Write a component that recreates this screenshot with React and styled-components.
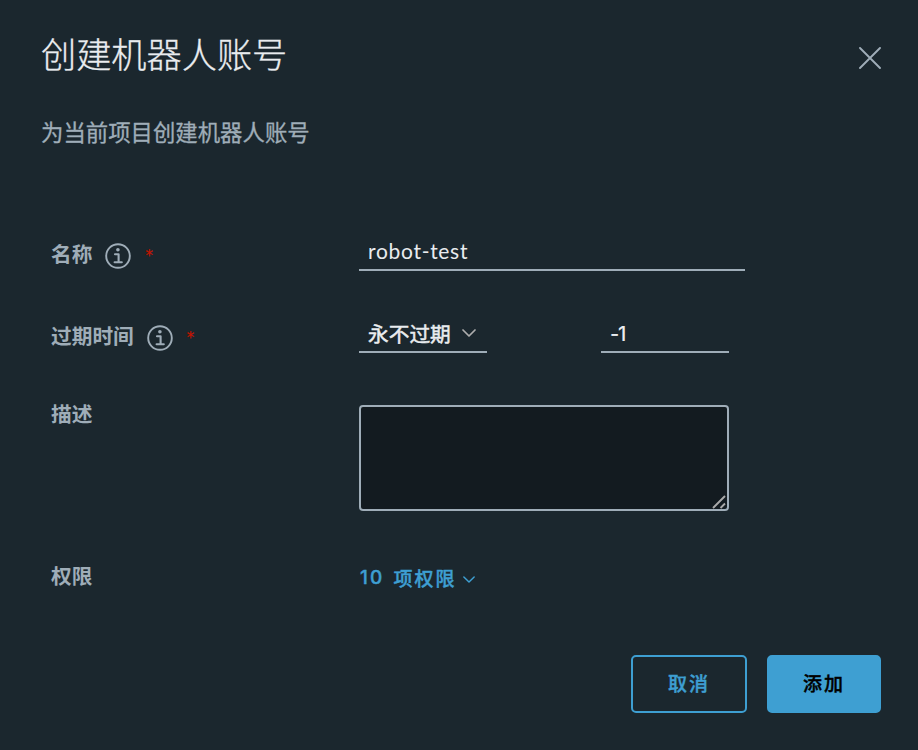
import React from "react";
import styled, { createGlobalStyle } from "styled-components";

const Global = createGlobalStyle`
  * { box-sizing: border-box; }
  body { margin: 0; background: #1b272e; }
  input, textarea, button { font: inherit; color: inherit; }
`;

const Dialog = styled.section`
  width: 918px;
  height: 750px;
  padding: 28px 37px 37px 41px;
  display: flex;
  flex-direction: column;
  background: #1b272e;
  color: #9fadb8;
  font-family: "Lato", "Noto Sans CJK SC", sans-serif;
`;

const Header = styled.header`
  display: flex;
  justify-content: space-between;
  height: 50px;
`;

const Title = styled.h1`
  margin: 0;
  font-size: 35.2px;
  line-height: 50px;
  font-weight: 300;
  font-family: "Noto Sans CJK SC", sans-serif;
  color: #e9ecef;
  -webkit-text-stroke: 0.3px currentColor;
  white-space: nowrap;
`;

const IconButton = styled.button`
  width: 22px;
  height: 22px;
  margin-top: 19px;
  padding: 0;
  border: 0;
  background: none;
  color: #9fadb8;
  svg { display: block; }
`;

const Subtitle = styled.p`
  margin: 37px 0 0;
  height: 32px;
  font-size: 22.4px;
  line-height: 32px;
  font-family: "Noto Sans CJK SC", sans-serif;
  -webkit-text-stroke: 0.3px currentColor;
  white-space: nowrap;
`;

const Form = styled.form`
  flex: 1;
  display: grid;
  grid-template-rows: 82px 82px 155px 60px;
  margin-top: 86px;
`;

const Row = styled.div`
  display: grid;
  grid-template-columns: 308px 1fr;
  align-items: start;
  padding-left: 10px;
`;

const Label = styled.label`
  display: flex;
  align-items: center;
  height: 38px;
  margin-top: ${(p) => p.$top || 0}px;
  font-size: 20.7px;
  line-height: 38px;
  font-weight: 700;
  font-family: "Noto Sans CJK SC", sans-serif;
  svg { margin: 3px 0 0 13px; }
`;

const LabelText = styled.span`
  margin-top: -2px;
`;

const Required = styled.span`
  height: 38px;
  margin: 4px 0 0 14px;
  font: 400 15px/38px "DejaVu Sans", sans-serif;
  color: #c41400;
  -webkit-text-stroke: 0.2px currentColor;
`;

const Fields = styled.div`
  display: flex;
  gap: 114px;
`;

const Underlined = styled.div`
  width: ${(p) => p.$width}px;
  height: 38px;
  display: flex;
  align-items: center;
  padding: ${(p) => p.$drop || 0}px 9px ${(p) => p.$lift || 0}px;
  border-bottom: 2px solid #9fadb8;
  color: #e9ecef;
  font-size: 20.7px;
  font-family: "Noto Sans CJK SC", sans-serif;
  svg { margin: 0 0 1px 11px; color: #adadad; }
`;

const Selected = styled.span`
  -webkit-text-stroke: 0.5px currentColor;
  white-space: nowrap;
`;

const TextInput = styled.input`
  width: 100%;
  height: 34px;
  padding: 0;
  border: 0;
  outline: 0;
  background: transparent;
  font-family: ${(p) => (p.$numeric ? '"Inter"' : '"Lato"')}, sans-serif;
  font-size: ${(p) => (p.$numeric ? 20 : 21)}px;
  font-weight: ${(p) => (p.$numeric ? 500 : 400)};
  letter-spacing: ${(p) => (p.$numeric ? -1.2 : 0.7)}px;
`;

const AreaWrap = styled.div`
  position: relative;
  width: 370px;
  height: 106px;
  margin-top: 8px;
`;

const Area = styled.textarea`
  display: block;
  width: 100%;
  height: 100%;
  padding: 8px;
  resize: none;
  outline: 0;
  border: 2px solid #9fadb8;
  border-radius: 4px;
  background: #131b20;
`;

const Grip = styled.svg`
  position: absolute;
  right: 3px;
  bottom: 2px;
`;

const Permissions = styled.button`
  display: flex;
  align-items: center;
  width: max-content;
  height: 38px;
  margin-top: 7px;
  padding: 0;
  border: 0;
  background: none;
  color: #3e9fd2;
  font: 500 19px/38px "Noto Sans CJK SC", sans-serif;
  letter-spacing: 2px;
  -webkit-text-stroke: 0.4px currentColor;
  svg { margin: 2px 0 0 6px; }
`;

const PermissionText = styled.span`
  margin-top: -1px;
`;

const Count = styled.span`
  margin: 0 9px 0 1px;
  font: 500 19px/38px "Inter", sans-serif;
  letter-spacing: 2.2px;
`;

const Footer = styled.footer`
  display: flex;
  justify-content: flex-end;
  gap: 20px;
`;

const Button = styled.button`
  width: ${(p) => (p.$primary ? 114 : 116)}px;
  height: 58px;
  padding: 0 0 2px;
  border: 2px solid #3e9fd2;
  border-radius: 5px;
  background: ${(p) => (p.$primary ? "#3e9fd2" : "transparent")};
  color: ${(p) => (p.$primary ? "#000" : "#3e9fd2")};
  font: 500 19px/28px "Noto Sans CJK SC", sans-serif;
  letter-spacing: 2px;
  -webkit-text-stroke: 0.4px currentColor;
`;

const InfoIcon = () => (
  <svg width="26" height="26" viewBox="0 0 26 26" fill="none" stroke="currentColor">
    <circle cx="13" cy="13" r="11.8" strokeWidth="1.9" />
    <circle cx="12.9" cy="6.8" r="1.8" fill="currentColor" stroke="none" />
    <path d="M10 11.2H13.6V19.2M9.6 19.2H16.8" strokeWidth="2.1" strokeLinecap="round" strokeLinejoin="round" />
  </svg>
);

const Chevron = ({ width, height }) => (
  <svg width={width} height={height} viewBox="0 0 14 8" fill="none" stroke="currentColor">
    <path d="M1 1L7 7L13 1" strokeWidth="1.7" strokeLinecap="round" strokeLinejoin="round" />
  </svg>
);

export default function App() {
  return (
    <>
      <Global />
      <Dialog role="dialog">
        <Header>
          <Title>创建机器人账号</Title>
          <IconButton type="button" aria-label="关闭">
            <svg width="22" height="22" viewBox="0 0 22 22" fill="none" stroke="currentColor">
              <path d="M1 1L21 21M21 1L1 21" strokeWidth="1.9" strokeLinecap="round" />
            </svg>
          </IconButton>
        </Header>
        <Subtitle>为当前项目创建机器人账号</Subtitle>
        <Form>
          <Row>
            <Label $top={2}><LabelText>名称</LabelText><InfoIcon /><Required>*</Required></Label>
            <Underlined $width={386} $lift={1}><TextInput defaultValue="robot-test" spellCheck={false} /></Underlined>
          </Row>
          <Row>
            <Label $top={2}><LabelText>过期时间</LabelText><InfoIcon /><Required>*</Required></Label>
            <Fields>
              <Underlined $width={128}><Selected>永不过期</Selected><Chevron width={14} height={8} /></Underlined>
              <Underlined $width={128} $drop={2}><TextInput $numeric defaultValue="-1" /></Underlined>
            </Fields>
          </Row>
          <Row>
            <Label $top={-2}><LabelText>描述</LabelText></Label>
            <AreaWrap>
              <Area />
              <Grip width="14" height="14" viewBox="0 0 14 14" fill="none" stroke="#a9a9a9" strokeWidth="1.9">
                <path d="M1 13L13 1M8.5 13L13 8.5" />
              </Grip>
            </AreaWrap>
          </Row>
          <Row>
            <Label $top={5}><LabelText>权限</LabelText></Label>
            <Permissions type="button"><Count>10</Count><PermissionText>项权限</PermissionText><Chevron width={12} height={7} /></Permissions>
          </Row>
        </Form>
        <Footer>
          <Button type="button">取消</Button>
          <Button type="button" $primary>添加</Button>
        </Footer>
      </Dialog>
    </>
  );
}
